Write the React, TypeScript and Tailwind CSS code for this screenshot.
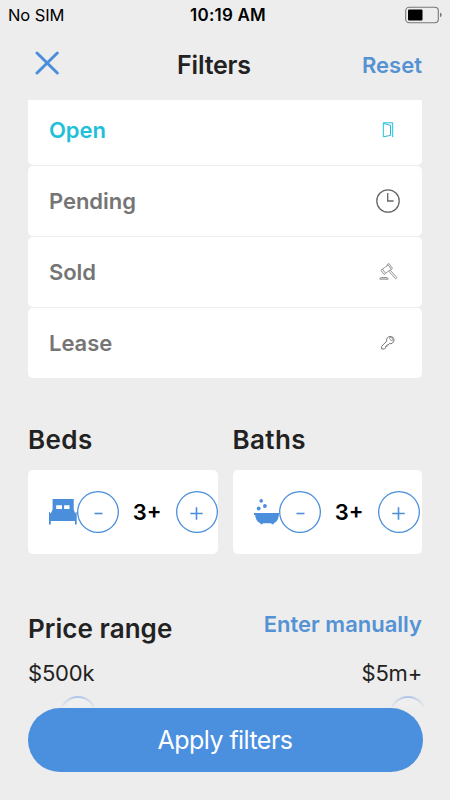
import type { ReactNode } from "react";

const statuses = [
  { label: "Open", icon: <DoorIcon />, active: true },
  { label: "Pending", icon: <ClockIcon />, active: false },
  { label: "Sold", icon: <GavelIcon />, active: false },
  { label: "Lease", icon: <KeyIcon />, active: false },
];

function DoorIcon() {
  return (
    <svg width="24" height="24" viewBox="0 0 24 24" fill="none" stroke="#1fc0d8" strokeWidth="1">
      <path d="M7.3 4.8H16.7V19.2M7.3 4.8V18.8" />
      <path d="M7.3 5.4L14.5 7.4V17.4L7.3 18.8" />
    </svg>
  );
}

function ClockIcon() {
  return (
    <svg width="24" height="24" viewBox="0 0 24 24" fill="none" stroke="#666" strokeWidth="1.3">
      <circle cx="12" cy="12" r="11.2" />
      <path d="M11.7 4V12H17.6" />
    </svg>
  );
}

function GavelIcon() {
  return (
    <svg width="24" height="24" viewBox="0 0 24 24" fill="none" stroke="#858585" strokeWidth="0.85" strokeLinejoin="round">
      <path d="M8.3 7.7L12.3 5L15.3 9.2L9.5 13.3L6.5 9.2Z" />
      <path d="M10.7 4.9L13 3.5L16.5 8.4L15.2 9.6M7 8.7L5 10.3L8.2 14.6L10 13.2" />
      <path d="M12.9 11.2L19.3 18.5C20.2 19.1 21.2 17.9 20.6 17.2L14.2 10.1" />
      <path d="M3.8 19.2V18.7C4.2 17.5 5 17.5 5.8 17.5H10C11.3 17.5 12.2 18 12.2 19.2Z" fill="#d5d5d5" />
    </svg>
  );
}

function KeyIcon() {
  return (
    <svg width="24" height="24" viewBox="0 0 24 24" fill="none" stroke="#777" strokeWidth="1" strokeLinejoin="round">
      <path d="M10.7 10.1C10 7.8 11.7 5.6 14 5.5C16.4 5.3 18.2 7 18 9.2C17.8 11.6 15.7 13.3 13.3 12.6L12.2 14H10.8V15.4H9.5V16.8L8.4 18H5.7V15.3Z" />
      <path d="M13.6 6.7C14.3 6 16.2 6.6 16.8 8C17.2 9 16.8 9.9 16.1 9.7C14.9 9.6 12.9 7.5 13.6 6.7Z" strokeWidth="0.8" />
    </svg>
  );
}

function BedIcon() {
  return (
    <svg width="28" height="26" viewBox="0 0 28 26" fill="#4b8edb" className="shrink-0">
      <path
        fillRule="evenodd"
        d="M3.6 0H24.7V10.6L26.1 14.2H26.7V12.9H27.7V25.5H26V22H1.8V25.5H0V12.9H1V14.2H1.9L3.6 10.6ZM7.2 6.2V10.1H13V6.2ZM15.1 6.2V10.1H20.5V6.2Z"
      />
    </svg>
  );
}

function BathIcon() {
  return (
    <svg width="25.5" height="26" viewBox="0 0 25.5 26" fill="#4b8edb" className="shrink-0">
      <circle cx="7.2" cy="1.9" r="1.8" />
      <circle cx="10.9" cy="7" r="1.9" />
      <circle cx="4.7" cy="9.5" r="1.9" />
      <path d="M0 14H25.5V15.9H24.8C24.5 20 22.8 23.2 19.8 24V25.3H17.8L17.2 24.2H9L8.4 25.3H6.4V24C3.4 23.2 1.6 20 1.2 15.9H0Z" />
    </svg>
  );
}

function RoundButton({ children }: { children: ReactNode }) {
  return (
    <button className="w-[42px] h-[42px] shrink-0 rounded-full ring-[1.3px] ring-inset ring-[#4b8edb] flex items-center justify-center">
      <svg width="13" height="13" viewBox="0 0 13 13" stroke="#4b8edb" strokeWidth="1.6" fill="none" className="mt-[3px]">
        {children}
      </svg>
    </button>
  );
}

function Counter({ title, icon, value }: { title: string; icon: ReactNode; value: string }) {
  return (
    <div className="w-[189.5px]">
      <h2 className="h-8 leading-8 text-[26px] font-semibold tracking-[0.4px] text-[#222]">{title}</h2>
      <div className="mt-3.5 h-[84px] rounded-[5px] bg-white pl-[21px] flex items-center">
        {icon}
        <RoundButton>
          <path d="M2.5 6.5H10.5" />
        </RoundButton>
        <span className="w-[56.5px] shrink-0 text-center text-[22px] font-semibold text-black">{value}</span>
        <RoundButton>
          <path d="M0.3 6.5H12.7M6.5 0.3V12.7" />
        </RoundButton>
      </div>
    </div>
  );
}

function SliderHandle() {
  return (
    <div className="w-[38px] h-[11px] overflow-hidden mask-x-from-60% mask-x-to-100%">
      <div className="h-[38px] rounded-full border-2 border-[#b3c8e8] bg-[#efefef]" />
    </div>
  );
}

export default function App() {
  return (
    <div className="relative w-[450px] h-[800px] overflow-hidden bg-[#ededed] font-['Inter','Liberation_Sans',sans-serif]">
      {/* Status bar */}
      <div className="h-[30px] grid grid-cols-3 items-center pl-2 pr-[7px] text-black">
        <span className="text-[16.5px] tracking-[-0.1px]">No SIM</span>
        <span className="pt-px text-center text-[17px] font-semibold tracking-[0.2px] whitespace-nowrap pl-[5px]">10:19 AM</span>
        <svg width="38" height="18" viewBox="0 0 38 18" className="justify-self-end">
          <rect x="0.7" y="1.3" width="32.6" height="15.4" rx="3.5" fill="none" stroke="#777" strokeWidth="1.1" />
          <rect x="3" y="3.5" width="14.5" height="11" rx="1" fill="#000" />
          <path d="M35 6.8C37.2 7.3 37.2 10.7 35 11.2Z" fill="#777" />
        </svg>
      </div>

      {/* Header */}
      <header className="h-[70px] px-7 grid grid-cols-3 items-center">
        <svg width="24" height="24" viewBox="0 0 24 24" stroke="#4b8edb" strokeWidth="3" strokeLinecap="round" className="ml-[7px] -mt-1">
          <path d="M2 2L22.3 22M22.3 2L2 22" />
        </svg>
        <h1 className="pr-[22px] pt-0.5 text-center text-[25px] font-semibold tracking-[-0.2px] text-[#222]">Filters</h1>
        <button className="justify-self-end text-[22px] font-semibold text-[#5592d4]">Reset</button>
      </header>

      {/* Scrolling content */}
      <main className="h-[700px] px-7 overflow-hidden">
        <div className="-mt-[5px] flex flex-col gap-px">
          {statuses.map((s) => (
            <div key={s.label} className="h-[70px] rounded-[5px] bg-white pl-[21px] pr-[22px] flex items-center justify-between">
              <span className={s.active ? "text-[22px] font-semibold tracking-[-0.05px] text-[#1fc0d8]" : "text-[22px] font-semibold tracking-[-0.05px] text-[#757575]"}>
                {s.label}
              </span>
              {s.icon}
            </div>
          ))}
        </div>

        <div className="mt-[46px] flex justify-between">
          <Counter title="Beds" icon={<BedIcon />} value="3+" />
          <Counter title="Baths" icon={<BathIcon />} value="3+" />
        </div>

        <div className="mt-[58px] h-8 flex items-center justify-between">
          <h2 className="text-[26px] font-semibold tracking-[0.05px] text-[#222]">Price range</h2>
          <button className="-mt-2 text-[22px] font-semibold text-[#5592d4]">Enter manually</button>
        </div>
        <div className="mt-[13px] h-8 flex items-center justify-between text-[22px] tracking-[-0.2px] text-[#222]">
          <span>$500k</span>
          <span>$5m+</span>
        </div>
        <div className="mt-[7px] pl-[31px] flex justify-between -mr-[5px]">
          <SliderHandle />
          <SliderHandle />
        </div>
      </main>

      {/* Sticky action over the slider */}
      <button className="absolute left-[27.5px] right-[27.5px] top-[708px] h-16 rounded-full bg-[#4b8fdf] pt-0.5 text-[25px] tracking-[-0.55px] text-white">
        Apply filters
      </button>
    </div>
  );
}
